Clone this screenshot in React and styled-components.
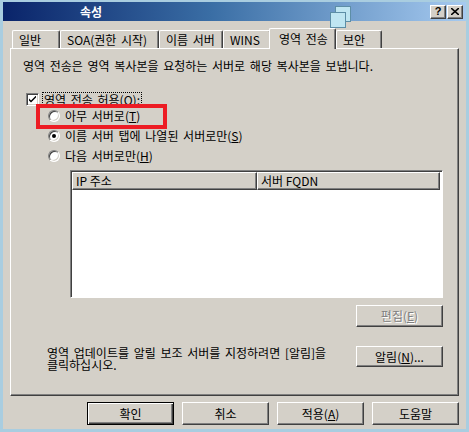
import React from 'react';
import styled, { createGlobalStyle, css } from 'styled-components';

const GlobalStyle = createGlobalStyle`
  html, body {
    margin: 0;
    padding: 0;
    background: #d4d0c8;
  }
  body {
    font-family: "Noto Sans CJK KR", "Noto Sans", sans-serif;
    font-size: 12px;
    color: #000;
  }
  * { box-sizing: border-box; }
`;

const raised = css`
  border: 1px solid;
  border-color: #fff #404040 #404040 #fff;
  box-shadow: inset -1px -1px 0 #808080;
`;

const Window = styled.div`
  position: relative;
  width: 469px;
  height: 432px;
  background: #d4d0c8;
  border: 3px solid #a9cde0;
  border-top-width: 2px;
  display: flex;
  flex-direction: column;
  overflow: hidden;
`;

const TitleBar = styled.div`
  height: 19px;
  flex: 0 0 auto;
  display: flex;
  align-items: center;
  padding: 0 3px 0 77px;
  background: linear-gradient(to right, #0a246a 0%, #3a6ea5 45%, #a6caf0 100%);
`;

const Title = styled.span`
  flex: 1;
  color: #fff;
  font-weight: bold;
  font-size: 12px;
  line-height: 19px;
`;

const CaptionButton = styled.button`
  ${raised};
  width: 16px;
  height: 14px;
  padding: 0;
  margin-left: ${p => (p.$gap ? '1px' : '0')};
  background: #d4d0c8;
  display: flex;
  align-items: center;
  justify-content: center;
  font-family: "Liberation Sans", sans-serif;
  font-weight: bold;
  font-size: 11px;
  line-height: 1;
`;

const Body = styled.div`
  flex: 1;
  display: flex;
  flex-direction: column;
  padding: 7px 7px 0 7px;
`;

const TabStrip = styled.div`
  height: 20px;
  display: flex;
  align-items: flex-end;
  padding-left: 2px;
`;

const Tab = styled.div`
  position: relative;
  width: ${p => p.$w}px;
  height: ${p => (p.$active ? 21 : 18)}px;
  margin: ${p => (p.$active ? '0 0 -1px -2px' : '0')};
  z-index: ${p => (p.$active ? 2 : 1)};
  padding: ${p => (p.$active ? '2px 0 0 9px' : '1px 0 0 6px')};
  background: #d4d0c8;
  border: 1px solid;
  border-color: #fff #404040 transparent #fff;
  border-bottom: none;
  box-shadow: inset -1px 0 0 #808080;
  border-radius: 2px 2px 0 0;
  line-height: 15px;
  white-space: nowrap;
  word-spacing: 2px;
`;

const Panel = styled.div`
  position: relative;
  height: 348px;
  ${raised};
  display: flex;
  flex-direction: column;
`;

const Description = styled.div`
  margin: 10px 0 0 12px;
  line-height: 13px;
  word-spacing: 2px;
`;

const CheckRow = styled.label`
  display: flex;
  align-items: center;
  height: 14px;
  margin: 20px 0 0 15px;
  gap: 4px;
`;

const CheckBox = styled.span`
  width: 13px;
  height: 13px;
  background: #fff;
  border: 1px solid;
  border-color: #808080 #fff #fff #808080;
  box-shadow: inset 1px 1px 0 #404040, inset -1px -1px 0 #d4d0c8;
  display: flex;
  align-items: center;
  justify-content: center;
`;

const FocusLabel = styled.span`
  outline: 1px dotted #000;
  outline-offset: 0;
  padding: 0 1px;
  line-height: 13px;
  word-spacing: 2px;
`;

const RadioGroup = styled.div`
  display: flex;
  flex-direction: column;
  gap: 6px;
  margin: 3px 0 0 37px;
`;

const RadioRow = styled.label`
  display: flex;
  align-items: center;
  height: 14px;
  gap: 5px;
  word-spacing: 2px;
  line-height: 14px;
`;

const Radio = styled.span`
  width: 12px;
  height: 12px;
  border-radius: 50%;
  background: #fff;
  border: 1px solid;
  border-color: #808080 #fff #fff #808080;
  box-shadow: inset 1px 1px 0 #404040, inset -1px -1px 0 #d4d0c8;
  display: flex;
  align-items: center;
  justify-content: center;
  &::after {
    content: '';
    width: 4px;
    height: 4px;
    border-radius: 50%;
    background: ${p => (p.$checked ? '#000' : 'transparent')};
  }
`;

const ListView = styled.div`
  width: 373px;
  height: 128px;
  margin: 7px 0 0 59px;
  background: #fff;
  border: 1px solid;
  border-color: #808080 #fff #fff #808080;
  box-shadow: inset 1px 1px 0 #404040;
  padding: 1px 2px 0 1px;
`;

const ListHeader = styled.div`
  display: flex;
  height: 18px;
`;

const HeaderCell = styled.div`
  ${raised};
  background: #d4d0c8;
  width: ${p => (p.$w ? `${p.$w}px` : 'auto')};
  flex: ${p => (p.$w ? '0 0 auto' : '1')};
  padding: 0 0 0 3px;
  line-height: 15px;
  white-space: nowrap;
`;

const Button = styled.button`
  ${raised};
  width: 87px;
  height: ${p => p.$h || 22}px;
  padding: 0;
  background: #d4d0c8;
  font-family: inherit;
  font-size: 12px;
  line-height: 14px;
  color: ${p => (p.$disabled ? '#808080' : '#000')};
  text-shadow: ${p => (p.$disabled ? '1px 1px 0 #fff' : 'none')};
  ${p =>
    p.$default &&
    css`
      border: 1px solid #000;
      box-shadow: inset 1px 1px 0 #fff, inset -1px -1px 0 #404040, inset -2px -2px 0 #808080;
    `}
`;

const EditRow = styled.div`
  display: flex;
  justify-content: flex-end;
  margin: 7px 15px 0 0;
`;

const NotifyRow = styled.div`
  display: flex;
  align-items: flex-start;
  justify-content: space-between;
  margin: 19px 15px 0 36px;
`;

const NotifyText = styled.div`
  line-height: 12px;
  padding-top: 1px;
  word-spacing: 2px;
`;

const Footer = styled.div`
  display: flex;
  justify-content: flex-end;
  gap: 8px;
  margin-top: 6px;
`;

const U = styled.span`
  text-decoration: underline;
  text-underline-offset: 1px;
`;

const Highlight = styled.div`
  position: absolute;
  left: 33px;
  top: 102px;
  width: 131px;
  height: 25px;
  border: 4px solid #ed1c24;
  pointer-events: none;
`;

const Badge = styled.svg`
  position: absolute;
  left: 325px;
  top: 3px;
`;

const tabs = [
  { label: '일반', w: 48 },
  { label: 'SOA(권한 시작)', w: 99 },
  { label: '이름 서버', w: 64 },
  { label: 'WINS', w: 48 },
  { label: '영역 전송', w: 67, active: true },
  { label: '보안', w: 46 },
];

export default function App() {
  return (
    <>
      <GlobalStyle />
      <Window>
        <TitleBar>
          <Title>속성</Title>
          <CaptionButton>?</CaptionButton>
          <CaptionButton $gap>
            <svg width="8" height="7" viewBox="0 0 8 7">
              <path d="M0 0L8 7M8 0L0 7" stroke="#000" strokeWidth="1.6" />
            </svg>
          </CaptionButton>
        </TitleBar>
        <Body>
          <TabStrip>
            {tabs.map(t => (
              <Tab key={t.label} $w={t.w} $active={t.active}>
                {t.label}
              </Tab>
            ))}
          </TabStrip>
          <Panel>
            <Description>영역 전송은 영역 복사본을 요청하는 서버로 해당 복사본을 보냅니다.</Description>
            <CheckRow>
              <CheckBox>
                <svg width="7" height="7" viewBox="0 0 7 7">
                  <path d="M0 2.5L0 4.5L2 6.5L7 1.5L7 -0.5L2 4.5Z" fill="#000" />
                </svg>
              </CheckBox>
              <FocusLabel>
                영역 전송 허용(<U>O</U>):
              </FocusLabel>
            </CheckRow>
            <RadioGroup>
              <RadioRow>
                <Radio />
                <span>
                  아무 서버로(<U>T</U>)
                </span>
              </RadioRow>
              <RadioRow>
                <Radio $checked />
                <span>
                  이름 서버 탭에 나열된 서버로만(<U>S</U>)
                </span>
              </RadioRow>
              <RadioRow>
                <Radio />
                <span>
                  다음 서버로만(<U>H</U>)
                </span>
              </RadioRow>
            </RadioGroup>
            <ListView>
              <ListHeader>
                <HeaderCell $w={185}>IP 주소</HeaderCell>
                <HeaderCell>서버 FQDN</HeaderCell>
              </ListHeader>
            </ListView>
            <EditRow>
              <Button $disabled>
                편집(<U>E</U>)
              </Button>
            </EditRow>
            <NotifyRow>
              <NotifyText>
                영역 업데이트를 알릴 보조 서버를 지정하려면 [알림]을
                <br />
                클릭하십시오.
              </NotifyText>
              <Button $h={21}>
                알림(<U>N</U>)...
              </Button>
            </NotifyRow>
          </Panel>
          <Footer>
            <Button $default $h={23}>확인</Button>
            <Button $h={23}>취소</Button>
            <Button $h={23}>
              적용(<U>A</U>)
            </Button>
            <Button $h={23}>도움말</Button>
          </Footer>
        </Body>
        <Highlight />
        <Badge width="24" height="24" viewBox="0 0 24 24">
          <rect x="7.5" y="1.5" width="15" height="15" fill="#bfe6f2" stroke="#5d8ea6" />
          <rect x="2.5" y="7.5" width="15" height="15" fill="#bfe6f2" stroke="#5d8ea6" />
        </Badge>
      </Window>
    </>
  );
}
